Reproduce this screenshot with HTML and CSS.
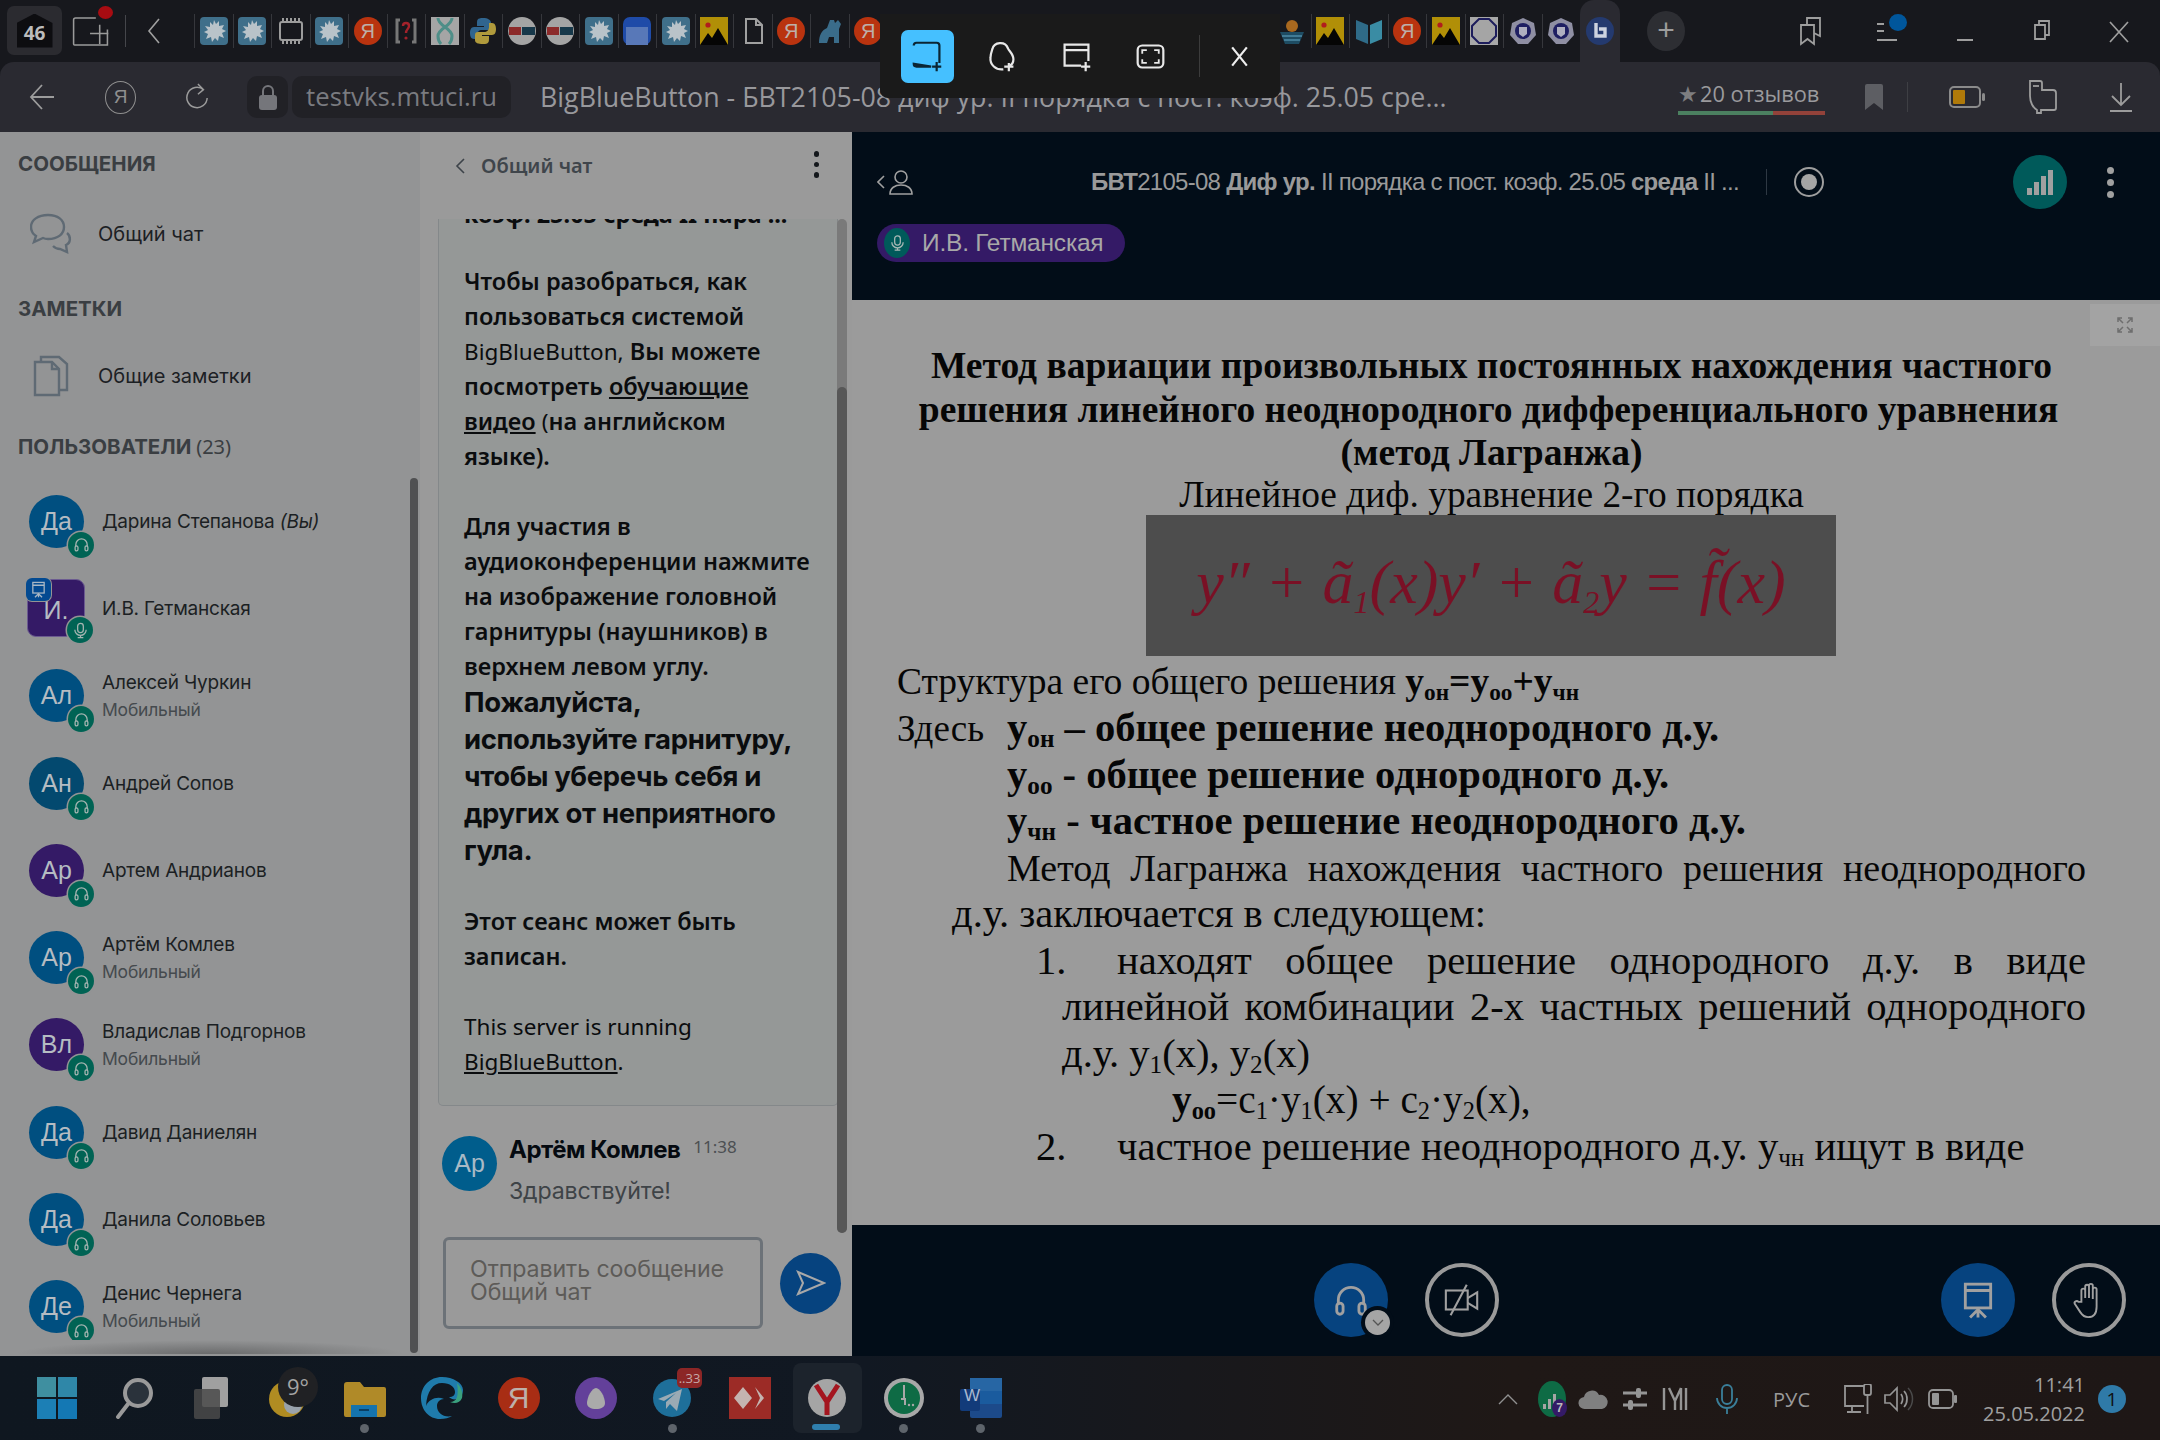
FILE: index.html
```html
<!DOCTYPE html>
<html lang="ru">
<head>
<meta charset="utf-8">
<title>BigBlueButton</title>
<link rel="stylesheet" href="styles.css">
</head>
<body>
<svg class="defs" width="0" height="0" aria-hidden="true">
  <defs>
    <symbol id="splat" viewBox="0 0 28 28"><rect width="28" height="28" rx="4" fill="#3f6f8a"/><path d="M14 3l2 4 3-3 0 5 5-1-2 4 4 2-4 2 2 5-5-2-1 5-3-3-3 4-1-5-5 2 2-5-4-2 4-2-3-4 5 1 0-5 3 3z" fill="#b9c3c9"/></symbol>
    <symbol id="chip" viewBox="0 0 28 28"><g fill="none" stroke="#9c9c9c" stroke-width="2"><rect x="3" y="5" width="22" height="18" rx="2"/><path d="M6 1v4M10 1v4M14 1v4M18 1v4M22 1v4M6 23v4M10 23v4M14 23v4M18 23v4M22 23v4"/></g></symbol>
    <symbol id="puzzle" viewBox="0 0 28 28"><path d="M8 3H5v22h3M20 3h3v22h-3" fill="none" stroke="#777" stroke-width="3"/><path d="M11 9c0-4 6-4 6 0 0 3-3 3-3 7" fill="none" stroke="#a3222b" stroke-width="2.4"/><circle cx="14" cy="21" r="1.6" fill="#a3222b"/></symbol>
    <symbol id="dna" viewBox="0 0 28 28"><rect width="28" height="28" fill="#a5a5a5"/><path d="M7 1c0 8 14 10 14 18 0 3-1 6-3 8M21 1c0 8-14 10-14 18 0 3 1 6 3 8" fill="none" stroke="#4e8e88" stroke-width="3"/></symbol>
    <symbol id="python" viewBox="0 0 28 28"><path d="M14 1c-6 0-6 2-6 6v2h7v1H5c-3 0-4 3-4 6s1 6 4 6h3v-4c0-3 2-5 5-5h6c2 0 3-1 3-3V6c0-3-3-5-8-5z" fill="#30658f"/><path d="M14 27c6 0 6-2 6-6v-2h-7v-1h10c3 0 4-3 4-6s-1-6-4-6h-3v4c0 3-2 5-5 5H9c-2 0-3 1-3 3v5c0 3 3 4 8 4z" fill="#b09a3c"/></symbol>
    <symbol id="mtu" viewBox="0 0 28 28"><circle cx="14" cy="14" r="14" fill="#a4a4a4"/><rect x="1" y="10" width="12" height="8" fill="#8c2a2a"/><rect x="14" y="10" width="13" height="8" fill="#17384a"/></symbol>
    <symbol id="bluepage" viewBox="0 0 28 28"><rect width="28" height="28" rx="7" fill="#1f4ba8"/><path d="M3 10h22v18H3z" fill="#5878b8"/></symbol>
    <symbol id="pic" viewBox="0 0 28 28"><rect width="28" height="28" fill="#b18f07"/><path d="M0 28l8-12 4 5 6-10 10 17z" fill="#050505"/><circle cx="8" cy="8" r="2.6" fill="#b11d1d"/></symbol>
    <symbol id="filei" viewBox="0 0 28 28"><path d="M7 2h10l6 6v18H7z M17 2v6h6" fill="none" stroke="#a0a0a0" stroke-width="2"/></symbol>
    <symbol id="frog" viewBox="0 0 28 28"><path d="M3 26c0-8 3-13 8-15l3-8h4l1 3 3-3 3 4-2 5v14h-5v-6h-5l-2 6z" fill="#3a6c8a"/></symbol>
    <symbol id="sunrise" viewBox="0 0 28 28"><circle cx="14" cy="9" r="6" fill="#a8681f"/><path d="M2 15h24L21 27H7z" fill="#1e4c63"/><path d="M4 19h20M6 23h16" stroke="#4e8ba8" stroke-width="1.4"/></symbol>
    <symbol id="book" viewBox="0 0 28 28"><path d="M1 3l12 5v19L1 22z" fill="#2f6b88"/><path d="M27 3L15 8v19l12-5z" fill="#3a8ca4"/></symbol>
    <symbol id="octa" viewBox="0 0 28 28"><rect width="28" height="28" fill="#a8a8a8"/><path d="M9 2h10l7 7v10l-7 7H9l-7-7V9z" fill="#a5a5a5" stroke="#1d1d5c" stroke-width="2"/></symbol>
    <symbol id="crest" viewBox="0 0 28 28"><path d="M14 1l11 5 2 12-8 9H9l-8-9 2-12z" fill="#8f8fa3"/><circle cx="14" cy="14" r="8" fill="#1f1f62"/><path d="M10 10h8v7l-4 3-4-3z" fill="#b0b0c0"/></symbol>
    <symbol id="bbb" viewBox="0 0 28 28"><circle cx="14" cy="14" r="14" fill="#243a6f"/><path d="M10 6v13h9v-7h-6" fill="none" stroke="#cdd3e0" stroke-width="3.4"/></symbol>
    <symbol id="chatbub" viewBox="0 0 42 42"><g fill="none" stroke="#5f6a74" stroke-width="2.4"><path d="M18 2C8 2 1 7 1 14c0 4 2 7 5 9l-2 6 9-4c2 1 3 1 5 1 10 0 16-5 16-12S28 2 18 2z"/><path d="M37 20c4 3 4 10-1 12l1 7-7-3c-3 0-5-1-7-3"/></g></symbol>
    <symbol id="notes" viewBox="0 0 36 42"><g fill="none" stroke="#5f6a74" stroke-width="2.4"><path d="M8 6V2h18l8 7v26h-7"/><path d="M2 7h17l7 7v26H2z"/><path d="M19 7v7h7"/></g></symbol>
    <symbol id="hp" viewBox="0 0 24 24"><g fill="none" stroke="currentColor" stroke-width="1.8"><path d="M4 15v-3a8 8 0 0 1 16 0v3"/><rect x="3" y="14" width="4" height="7" rx="2"/><rect x="17" y="14" width="4" height="7" rx="2"/></g></symbol>
    <symbol id="mic" viewBox="0 0 24 24"><g fill="none" stroke="currentColor" stroke-width="1.8"><rect x="8" y="2" width="8" height="13" rx="4"/><path d="M4 11a8 8 0 0 0 16 0M12 19v3M8 22h8"/></g></symbol>
    <symbol id="pres" viewBox="0 0 24 24"><g fill="none" stroke="currentColor" stroke-width="1.8"><rect x="4" y="2" width="16" height="15"/><path d="M4 6h16M12 17v6M12 18l-5 5M12 18l5 5"/></g></symbol>
    <symbol id="camoff" viewBox="0 0 40 40"><g fill="none" stroke="currentColor" stroke-width="2.2"><rect x="3" y="10" width="23" height="20"/><path d="M26 18l10-6v17l-10-6M25 4L8 36"/></g></symbol>
    <symbol id="hand" viewBox="0 0 40 40"><path d="M12 22V10a2 2 0 0 1 4 0v8-12a2 2 0 0 1 4 0v12V5a2 2 0 0 1 4 0v14-10a2 2 0 0 1 4 0v18c0 7-3 11-9 11-4 0-6-2-8-5l-6-9c-1-2 2-4 4-2z" fill="none" stroke="currentColor" stroke-width="2"/></symbol>
    <symbol id="snipadd" viewBox="0 0 36 36"><g fill="none" stroke="currentColor" stroke-width="2.4"><path d="M3 6a3 3 0 0 1 3-3h22a3 3 0 0 1 3 3v19M22 29H6a3 3 0 0 1-3-3z"/><path d="M28 24v10M23 29h10"/></g></symbol>
  </defs>
</svg>

<div class="app">
  <header class="tabstrip">
    <div class="home"><span>46</span></div>
    <div class="newtab">
      <svg class="ico-newtab" viewBox="0 0 38 30"><path d="M24 1H3a2 2 0 0 0-2 2v25a1 1 0 0 0 1 1h34V13M28 8v20M18 17h19" fill="none" stroke="#9a9a9a" stroke-width="1.6"/></svg>
      <i class="reddot"></i>
    </div>
    <i class="vsep"></i>
    <svg class="ico-back" viewBox="0 0 14 26"><path d="M12 1L2 13l10 12" fill="none" stroke="#a0a0a0" stroke-width="1.6"/></svg>
    <div class="tabs">
      <div class="tab"><svg class="fav"><use href="#splat"/></svg></div>
      <div class="tab"><svg class="fav"><use href="#splat"/></svg></div>
      <div class="tab"><svg class="fav"><use href="#chip"/></svg></div>
      <div class="tab"><svg class="fav"><use href="#splat"/></svg></div>
      <div class="tab"><span class="ya">Я</span></div>
      <div class="tab"><svg class="fav"><use href="#puzzle"/></svg></div>
      <div class="tab"><svg class="fav"><use href="#dna"/></svg></div>
      <div class="tab"><svg class="fav"><use href="#python"/></svg></div>
      <div class="tab"><svg class="fav"><use href="#mtu"/></svg></div>
      <div class="tab"><svg class="fav"><use href="#mtu"/></svg></div>
      <div class="tab"><svg class="fav"><use href="#splat"/></svg></div>
      <div class="tab"><svg class="fav"><use href="#bluepage"/></svg></div>
      <div class="tab"><svg class="fav"><use href="#splat"/></svg></div>
      <div class="tab"><svg class="fav"><use href="#pic"/></svg></div>
      <div class="tab"><svg class="fav"><use href="#filei"/></svg></div>
      <div class="tab"><span class="ya">Я</span></div>
      <div class="tab"><svg class="fav"><use href="#frog"/></svg></div>
      <div class="tab"><span class="ya">Я</span></div>
      <div class="tab"></div><div class="tab"></div><div class="tab"></div><div class="tab"></div><div class="tab"></div>
      <div class="tab"></div><div class="tab"></div><div class="tab"></div><div class="tab"></div><div class="tab"></div>
      <div class="tab"><svg class="fav"><use href="#sunrise"/></svg></div>
      <div class="tab"><svg class="fav"><use href="#pic"/></svg></div>
      <div class="tab"><svg class="fav"><use href="#book"/></svg></div>
      <div class="tab"><span class="ya">Я</span></div>
      <div class="tab"><svg class="fav"><use href="#pic"/></svg></div>
      <div class="tab"><svg class="fav"><use href="#octa"/></svg></div>
      <div class="tab"><svg class="fav"><use href="#crest"/></svg></div>
      <div class="tab"><svg class="fav"><use href="#crest"/></svg></div>
      <div class="tab tab-active"><svg class="fav"><use href="#bbb"/></svg></div>
    </div>
    <div class="plus">+</div>
    <div class="winctl">
      <svg class="wc" viewBox="0 0 24 30"><path d="M2 9h13v19l-6.500-5L2 28zM8 9V2h13v18l-6-3" fill="none" stroke="#9e9e9e" stroke-width="1.8"/></svg>
      <div class="menu-dot"><svg class="wc" viewBox="0 0 24 30"><path d="M1 8h7M1 15h7M1 24h20" stroke="#9e9e9e" stroke-width="2"/></svg><i></i></div>
      <svg class="wc" viewBox="0 0 24 30"><path d="M4 24h16" stroke="#9e9e9e" stroke-width="2"/></svg>
      <svg class="wc" viewBox="0 0 24 30"><path d="M5 9h10v14H5zM9 9V5h10v14h-4" fill="none" stroke="#9e9e9e" stroke-width="1.8"/></svg>
      <svg class="wc" viewBox="0 0 24 30"><path d="M3 6l18 20M21 6L3 26" stroke="#9e9e9e" stroke-width="1.7"/></svg>
    </div>
  </header>

  <nav class="toolbar">
    <svg class="tb-back" viewBox="0 0 26 28"><path d="M25 14H2M13 2L2 14l11 12" fill="none" stroke="#9c9c9c" stroke-width="1.8"/></svg>
    <div class="tb-ya">Я</div>
    <svg class="tb-reload" viewBox="0 0 26 30"><path d="M20 7A11 11 0 1 0 24 16M14 1l6 6-6 5" fill="none" stroke="#9c9c9c" stroke-width="1.6"/></svg>
    <div class="lockbox"><svg class="lock" viewBox="0 0 18 26"><path d="M4 11V7a5 5 0 0 1 10 0v4" fill="none" stroke="#75767b" stroke-width="2"/><rect x="0" y="11" width="18" height="15" rx="3" fill="#75767b"/></svg></div>
    <div class="urlbox">testvks.mtuci.ru</div>
    <div class="pagetitle">BigBlueButton - БВТ2105-08 диф ур. II порядка с пост. коэф. 25.05 сре...</div>
    <div class="reviews">
      <div class="rev-text"><span class="star">★</span>20 отзывов</div>
      <div class="rev-bar"><i class="g"></i><i class="r"></i></div>
    </div>
    <svg class="tb-mark" viewBox="0 0 18 26"><path d="M0 2a2 2 0 0 1 2-2h14a2 2 0 0 1 2 2v24l-9-7-9 7z" fill="#5d5e63"/></svg>
    <i class="tb-sep"></i>
    <svg class="tb-bat" viewBox="0 0 36 24"><rect x="1" y="2" width="30" height="20" rx="4" fill="none" stroke="#8b8b8b" stroke-width="2"/><rect x="4" y="5" width="12" height="14" rx="1" fill="#b07a0a"/><rect x="33" y="8" width="3" height="8" rx="1.500" fill="#8b8b8b"/></svg>
    <svg class="tb-ext" viewBox="0 0 32 34"><path d="M3 1h10a2 2 0 0 1 2 2v7h11a3 3 0 0 1 3 3v15a2 2 0 0 1-2 2H14v3h-4v-3c-4-2-7-8-7-14z" fill="none" stroke="#9c9c9c" stroke-width="1.8"/><path d="M6 6h6" stroke="#9c9c9c" stroke-width="1.800"/></svg>
    <svg class="tb-dl" viewBox="0 0 24 30"><path d="M12 1v22M3 14l9 9 9-9M1 29h22" fill="none" stroke="#9c9c9c" stroke-width="1.8"/></svg>
  </nav>

  <main class="main">
    <aside class="sidebar">
      <h2 class="side-head">СООБЩЕНИЯ</h2>
      <div class="side-item side-item-chat"><svg class="side-ico"><use href="#chatbub"/></svg><span>Общий чат</span></div>
      <h2 class="side-head side-head-notes">ЗАМЕТКИ</h2>
      <div class="side-item side-item-notes"><svg class="side-ico"><use href="#notes"/></svg><span>Общие заметки</span></div>
      <h2 class="side-head side-head-users">ПОЛЬЗОВАТЕЛИ <small>(23)</small></h2>
      <ul class="users">
        <li class="user"><div class="av av-blue">Да<span class="st"><svg><use href="#hp"/></svg></span></div><div class="uname">Дарина Степанова <em>(Вы)</em></div></li>
        <li class="user"><div class="av av-purple av-square">И.<span class="st"><svg><use href="#mic"/></svg></span><span class="st-pres"><svg><use href="#pres"/></svg></span></div><div class="uname">И.В. Гетманская</div></li>
        <li class="user"><div class="av av-blue">Ал<span class="st"><svg><use href="#hp"/></svg></span></div><div class="uname">Алексей Чуркин<small>Мобильный</small></div></li>
        <li class="user"><div class="av av-blue2">Ан<span class="st"><svg><use href="#hp"/></svg></span></div><div class="uname">Андрей Сопов</div></li>
        <li class="user"><div class="av av-purple">Ар<span class="st"><svg><use href="#hp"/></svg></span></div><div class="uname">Артем Андрианов</div></li>
        <li class="user"><div class="av av-blue">Ар<span class="st"><svg><use href="#hp"/></svg></span></div><div class="uname">Артём Комлев<small>Мобильный</small></div></li>
        <li class="user"><div class="av av-purple">Вл<span class="st"><svg><use href="#hp"/></svg></span></div><div class="uname">Владислав Подгорнов<small>Мобильный</small></div></li>
        <li class="user"><div class="av av-blue">Да<span class="st"><svg><use href="#hp"/></svg></span></div><div class="uname">Давид Даниелян</div></li>
        <li class="user"><div class="av av-blue">Да<span class="st"><svg><use href="#hp"/></svg></span></div><div class="uname">Данила Соловьев</div></li>
        <li class="user"><div class="av av-blue">Де<span class="st"><svg><use href="#hp"/></svg></span></div><div class="uname">Денис Чернега<small>Мобильный</small></div></li>
      </ul>
      <i class="side-shadow"></i>
      <i class="side-scroll"></i>
    </aside>

    <section class="chat">
      <div class="chat-head">
        <svg class="chat-back" viewBox="0 0 10 16"><path d="M9 1L2 8l7 7" fill="none" stroke="#3d4349" stroke-width="1.6"/></svg>
        <span class="chat-title">Общий чат</span>
        <span class="kebab kebab-dark"><i></i><i></i><i></i></span>
      </div>
      <div class="chat-scroll">
        <div class="welcome">
          <p class="clipline">коэф. 25.05 среда II пара ...</p>
          <p>Чтобы разобраться, как<br>пользоваться системой<br><span class="lat">BigBlueButton,</span> Вы можете<br>посмотреть <u>обучающие</u><br><u>видео</u> <span class="lat">(</span>на английском<br>языке).</p>
          <p>Для участия в<br>аудиоконференции нажмите<br>на изображение головной<br>гарнитуры (наушников) в<br>верхнем левом углу.</p>
          <p class="strong">Пожалуйста,<br>используйте гарнитуру,<br>чтобы уберечь себя и<br>других от неприятного<br>гула.</p>
          <p>Этот сеанс может быть<br>записан.</p>
          <p class="lat-p">This server is running<br><u>BigBlueButton</u>.</p>
        </div>
        <i class="chat-track"></i>
        <i class="chat-thumb"></i>
      </div>
      <div class="msg">
        <div class="msg-av">Ар</div>
        <div class="msg-body">
          <div class="msg-top"><b>Артём Комлев</b><time>11:38</time></div>
          <div class="msg-text">Здравствуйте!</div>
        </div>
      </div>
      <div class="composer">
        <div class="input">Отправить сообщение<br>Общий чат</div>
        <div class="send"><svg viewBox="0 0 30 26"><path d="M2 2l26 11L2 24l5-11z" fill="none" stroke="#a8a8a8" stroke-width="2"/></svg></div>
      </div>
    </section>

    <section class="pres">
      <div class="pres-top">
        <div class="pres-row">
          <svg class="usertoggle" viewBox="0 0 38 26"><path d="M7 7L1 13l6 6" fill="none" stroke="#a0a0a0" stroke-width="1.600"/><circle cx="24" cy="8" r="6" fill="none" stroke="#a0a0a0" stroke-width="1.600"/><path d="M13 25c0-6 5-9 11-9s11 3 11 9z" fill="none" stroke="#a0a0a0" stroke-width="1.600"/></svg>
          <div class="meeting"><b>БВТ</b>2105-08 <b>Диф ур.</b> II <span>порядка с пост. коэф.</span> 25.05 <b>среда</b> II ...</div>
          <i class="rec-sep"></i>
          <div class="rec"><i></i></div>
          <div class="signal"><i class="b1"></i><i class="b2"></i><i class="b3"></i><i class="b4"></i></div>
          <span class="kebab"><i></i><i></i><i></i></span>
        </div>
        <div class="talker"><span class="talker-mic"><svg><use href="#mic"/></svg></span>И.В. Гетманская</div>
      </div>
      <div class="slide">
        <div class="expand"><svg viewBox="0 0 20 20"><path d="M7 3H3v4M3 3l5 5M13 3h4v4M17 3l-5 5M7 17H3v-4M3 17l5-5M13 17h4v-4M17 17l-5-5" fill="none" stroke="#6e6e6e" stroke-width="1.500"/></svg></div>
        <div class="t-head">Метод вариации произвольных постоянных нахождения частного</div>
        <div class="t-head t-head-2">решения линейного неоднородного дифференциального уравнения</div>
        <div class="t-head">(метод Лагранжа)</div>
        <div class="t-sub">Линейное диф. уравнение 2-го порядка</div>
        <div class="formula">y″ + ã<sub>1</sub>(x)y′ + ã<sub>2</sub>y = f̃(x)</div>
        <div class="ln ln-s">Структура его общего решения <b>у<sub>он</sub>=у<sub>оо</sub>+у<sub>чн</sub></b></div>
        <div class="ln"><span class="zd">Здесь</span><b>у<sub>он</sub> – общее решение неоднородного д.у.</b></div>
        <div class="ln ind"><b>у<sub>оо</sub> - общее решение однородного д.у.</b></div>
        <div class="ln ind"><b>у<sub>чн</sub> - частное решение неоднородного д.у.</b></div>
        <div class="ln ind just meth">Метод Лагранжа нахождения частного решения неоднородного</div>
        <div class="ln ind2">д.у. заключается в следующем:</div>
        <div class="ln num"><span class="n">1.</span><span class="nt just-in">находят общее решение однородного д.у. в виде</span></div>
        <div class="ln ind3 just">линейной комбинации 2-х частных решений однородного</div>
        <div class="ln ind3">д.у. у<sub>1</sub>(x), у<sub>2</sub>(x)</div>
        <div class="ln ind4"><b>у<sub>оо</sub></b>=c<sub>1</sub>·у<sub>1</sub>(x) + c<sub>2</sub>·у<sub>2</sub>(x),</div>
        <div class="ln num"><span class="n">2.</span><span class="nt">частное решение неоднородного д.у. у<sub>чн</sub> ищут в виде</span></div>
      </div>
      <div class="pres-bottom">
        <div class="pb-left">
          <div class="rbtn rbtn-blue"><svg><use href="#hp"/></svg><span class="rbtn-caret"><svg viewBox="0 0 12 8"><path d="M1 1l5 5 5-5" fill="none" stroke="#555" stroke-width="1.300"/></svg></span></div>
          <div class="rbtn rbtn-ring"><svg><use href="#camoff"/></svg></div>
        </div>
        <div class="pb-right">
          <div class="rbtn rbtn-blue"><svg><use href="#pres"/></svg></div>
          <div class="rbtn rbtn-ring"><svg><use href="#hand"/></svg></div>
        </div>
      </div>
    </section>
  </main>

  <footer class="taskbar">
    <div class="tb-apps">
      <div class="app-i"><svg viewBox="0 0 42 42"><rect x="1" y="0" width="19" height="20" fill="#3f8fa0"/><rect x="22" y="0" width="19" height="20" fill="#2f87a8"/><rect x="1" y="22" width="19" height="20" fill="#1c7fb5"/><rect x="22" y="22" width="19" height="20" fill="#1478b4"/></svg></div>
      <div class="app-i"><svg viewBox="0 0 42 42"><circle cx="25" cy="16" r="13" fill="#2a323b" stroke="#9a9a9a" stroke-width="4"/><path d="M15 27L5 40" stroke="#9a9a9a" stroke-width="4" stroke-linecap="round"/></svg></div>
      <div class="app-i"><svg viewBox="0 0 42 42"><rect x="12" y="0" width="26" height="30" rx="2" fill="#a0a0a0"/><rect x="4" y="12" width="26" height="30" rx="2" fill="#4a4a4a" opacity=".85"/></svg></div>
      <div class="app-i app-weather"><svg viewBox="0 0 42 42"><circle cx="20" cy="22" r="18" fill="#b08c22"/><circle cx="26" cy="28" r="9" fill="#99a2ab"/><rect x="24" y="14" width="4" height="10" fill="#a32a30"/></svg><span class="wtemp">9°</span></div>
      <div class="app-i has-dot"><svg viewBox="0 0 42 42"><path d="M0 8a3 3 0 0 1 3-3h13l4 5h20a2 2 0 0 1 2 2v26a2 2 0 0 1-2 2H2a2 2 0 0 1-2-2z" fill="#b08a28"/><path d="M7 28h26v12H7z" fill="#1573ad"/><path d="M15 33h10" stroke="#0a3f64" stroke-width="2"/></svg></div>
      <div class="app-i"><svg viewBox="0 0 42 42"><path d="M21 0C9 0 0 9 0 21c0 12 8 21 19 21 5 0 9-1 12-3-8 2-15-3-15-10 0-4 3-7 7-7-7-3-15 0-18 7C6 14 12 6 21 6c8 0 13 4 13 9 0 3-2 5-6 5 3 3 7 3 10 1 3-2 4-5 4-8C42 6 32 0 21 0z" fill="#1f7bab"/><path d="M36 6c5 5 6 11 5 15-2 5-7 6-12 4 7 0 9-6 7-19z" fill="#3aa07e"/></svg></div>
      <div class="app-i"><span class="ya ya-big">Я</span></div>
      <div class="app-i"><svg viewBox="0 0 42 42"><circle cx="21" cy="21" r="21" fill="#63409a"/><path d="M21 11c4 0 9 9 9 15 0 4-4 6-9 6s-9-2-9-6c0-6 5-15 9-15z" fill="#aaa"/></svg></div>
      <div class="app-i has-dot app-tg"><svg viewBox="0 0 42 42"><circle cx="20" cy="21" r="19" fill="#1e6f9a"/><path d="M6 22l24-10-5 22-7-7-4 5 0-7 10-9-12 8z" fill="#9aaab4"/></svg><span class="tg-badge">..33</span></div>
      <div class="app-i"><svg viewBox="0 0 42 42"><rect width="42" height="42" fill="#9c2b26"/><path d="M14 10l-9 11 9 11 9-11zM26 10l9 11-9 11 5-11z" fill="#c4b4b0"/></svg></div>
      <div class="app-i app-active has-bar"><svg viewBox="0 0 42 42"><circle cx="21" cy="21" r="19" fill="#a5a5a5"/><path d="M10 8l11 17 11-17M21 24v14" fill="none" stroke="#a4151f" stroke-width="5"/></svg></div>
      <div class="app-i has-dot"><svg viewBox="0 0 42 42"><circle cx="21" cy="21" r="20" fill="#a8a8a8"/><circle cx="21" cy="21" r="16" fill="#0e6b45"/><path d="M21 8v14M18 22h4v6" stroke="#a8a8a8" stroke-width="2" fill="none"/><circle cx="26" cy="28" r="1.200" fill="#a8a8a8"/><circle cx="30" cy="28" r="1.200" fill="#a8a8a8"/></svg></div>
      <div class="app-i has-dot app-word"><svg viewBox="0 0 42 42"><rect x="10" y="1" width="32" height="40" rx="2" fill="#1c4a8a"/><rect x="10" y="1" width="32" height="13" fill="#2766a4"/><rect x="10" y="14" width="32" height="13" fill="#1a5b9e"/><rect x="0" y="12" width="20" height="22" rx="2" fill="#123b7a"/></svg><span class="w-letter">W</span></div>
    </div>
    <div class="tray">
      <svg class="tr tr-caret" viewBox="0 0 20 12"><path d="M1 11l9-9 9 9" fill="none" stroke="#909090" stroke-width="1.400"/></svg>
      <div class="tr-net"><i class="n1"></i><i class="n2"></i><i class="n3"></i><b>7</b></div>
      <svg class="tr tr-cloud" viewBox="0 0 30 24"><path d="M7 22a6 6 0 0 1-1-12 8 8 0 0 1 15-2 7 7 0 0 1 3 14z" fill="#808080"/></svg>
      <svg class="tr tr-slide" viewBox="0 0 26 24"><path d="M1 6h24M1 18h24" stroke="#959595" stroke-width="3"/><rect x="14" y="1" width="5" height="10" rx="2" fill="#959595"/><rect x="6" y="13" width="5" height="10" rx="2" fill="#959595"/></svg>
      <svg class="tr tr-m" viewBox="0 0 26 24"><path d="M2 1v22M7 1l6 13 6-13M13 14v9M24 1v22M19 1v22" fill="none" stroke="#959595" stroke-width="2.400"/></svg>
      <svg class="tr tr-mic" viewBox="0 0 22 30"><rect x="6" y="1" width="10" height="19" rx="5" fill="none" stroke="#3a7f9a" stroke-width="1.800"/><path d="M1 14a10 10 0 0 0 20 0M11 24v6" fill="none" stroke="#3a7f9a" stroke-width="1.800"/></svg>
      <span class="tr-lang">РУС</span>
      <svg class="tr tr-mon" viewBox="0 0 28 30"><path d="M20 2H1v20h19M8 22v5M3 28h14" fill="none" stroke="#959595" stroke-width="1.800"/><rect x="20" y="0" width="7" height="11" rx="2" fill="none" stroke="#959595" stroke-width="1.800"/><path d="M23.500 11v19" stroke="#959595" stroke-width="1.800"/></svg>
      <svg class="tr tr-spk" viewBox="0 0 30 26"><path d="M1 9h5l7-7v22l-7-7H1zM17 8c2 3 2 7 0 10M20 5c4 4 4 12 0 16" fill="none" stroke="#959595" stroke-width="1.700"/><path d="M24 2c6 6 6 16 0 22" fill="none" stroke="#4a4a4a" stroke-width="1.500"/></svg>
      <svg class="tr tr-bat" viewBox="0 0 30 20"><rect x="1" y="1" width="24" height="18" rx="4" fill="none" stroke="#959595" stroke-width="1.800"/><rect x="4" y="4" width="7" height="12" rx="1" fill="#959595"/><rect x="26" y="6" width="3" height="8" rx="1" fill="#959595"/></svg>
      <div class="clock"><span>11:41</span><span>25.05.2022</span></div>
      <div class="notif">1</div>
    </div>
  </footer>
</div>

<div class="snip">
  <div class="snip-btn snip-on"><svg><use href="#snipadd"/></svg></div>
  <div class="snip-btn"><svg viewBox="0 0 36 36"><path d="M8 10c2-8 14-9 17-1 1 3 6 6 6 12 0 4-2 6-4 7M20 32c-8 1-15-5-14-13 0-3 1-6 2-9" fill="none" stroke="#e8e8e8" stroke-width="2.400"/><path d="M26 25v9M21 29h10" stroke="#e8e8e8" stroke-width="2.400"/></svg></div>
  <div class="snip-btn"><svg viewBox="0 0 36 36"><path d="M5 5h26v6H5zM5 11v17h18M31 11v12M28 24v10M23 29h10" fill="none" stroke="#e8e8e8" stroke-width="2.400"/></svg></div>
  <div class="snip-btn"><svg viewBox="0 0 36 36"><rect x="4" y="6" width="28" height="24" rx="5" fill="none" stroke="#e8e8e8" stroke-width="2.400"/><path d="M9 15v-4h5M22 11h5v4M27 21v4h-5M14 25H9v-4" fill="none" stroke="#e8e8e8" stroke-width="2"/></svg></div>
  <i class="snip-sep"></i>
  <div class="snip-btn snip-last"><svg viewBox="0 0 36 36"><path d="M10 8l16 20M26 8L10 28" stroke="#eee" stroke-width="2.400"/></svg></div>
</div>
</body>
</html>
```
FILE: styles.css
```css
* { box-sizing: border-box; }
html, body { margin: 0; padding: 0; }
body { width: 2160px; height: 1440px; overflow: hidden; position: relative; background: #17181d; font-family: "Inter", "Liberation Sans", sans-serif; }
.defs { position: absolute; }
ul { list-style: none; margin: 0; padding: 0; }
p { margin: 0; }
i { display: block; font-style: normal; }
svg { display: block; }

.app { display: grid; grid-template-rows: 62px 70px 1224px 84px; width: 2160px; height: 1440px; }

/* tab strip */
.tabstrip { display: flex; align-items: center; background: #17181d; height: 62px; padding-left: 7px; position: relative; }
.home { width: 55px; height: 49px; margin-top: -1px; background: #2b2b30; border-radius: 7px; display: flex; align-items: center; justify-content: center; }
.home span { background: #0d0d10; color: #bcbcbc; font: 700 19px "Open Sans", sans-serif; padding: 4px 3px 0; clip-path: polygon(50% 0, 100% 28%, 100% 100%, 0 100%, 0 28%); width: 36px; height: 34px; text-align: center; line-height: 30px; }
.newtab { width: 38px; height: 29px; margin-left: 10px; position: relative; }
.ico-newtab { width: 38px; height: 29px; }
.reddot { position: absolute; left: 26px; top: -11px; width: 15px; height: 13px; border-radius: 50%; background: #a80c12; }
.vsep { width: 1px; height: 32px; background: #45464b; margin-left: 15px; }
.ico-back { width: 14px; height: 26px; margin-left: 21px; }
.tabs { display: flex; margin-left: 33px; height: 62px; align-items: center; }
.tab { width: 38.5px; height: 34px; border-left: 1px solid #36373c; display: flex; align-items: center; justify-content: center; position: relative; }
.tab-active { height: 62px; border-left: 0; width: 40px; background: #2a2a31; border-radius: 14px 14px 0 0; }
.fav { width: 28px; height: 28px; }
.ya { width: 28px; height: 28px; border-radius: 50%; background: #b9330f; color: #bdb0aa; font: 400 20px/28px "Liberation Sans", sans-serif; text-align: center; display: block; }
.plus { width: 38px; height: 40px; margin-left: 27px; border-radius: 50%; background: #2d2e33; color: #9d9d9d; font: 300 30px/38px "Liberation Sans", sans-serif; text-align: center; }
.winctl { display: flex; margin-left: auto; align-items: center; gap: 53px; padding-right: 29px; }
.wc { width: 24px; height: 30px; }
.menu-dot { position: relative; }
.menu-dot i { position: absolute; left: 13px; top: -2px; width: 18px; height: 17px; border-radius: 50%; background: #00569b; }

/* toolbar */
.toolbar { display: flex; align-items: center; background: #2a2a31; border-radius: 14px 14px 0 0; height: 70px; position: relative; padding-left: 29px; }
.tb-back { width: 26px; height: 28px; }
.tb-ya { width: 31px; height: 33px; margin-left: 50px; border-radius: 50%; border: 1.500px solid #8f8f8f; color: #8f8f8f; font: 400 19px/30px "Liberation Sans", sans-serif; text-align: center; }
.tb-reload { width: 24px; height: 30px; margin-left: 49px; }
.lockbox { width: 41px; height: 42px; margin-left: 38px; background: #212126; border-radius: 10px; display: flex; align-items: center; justify-content: center; }
.lock { width: 18px; height: 26px; }
.urlbox { width: 219px; height: 42px; margin-left: 4px; background: #212126; border-radius: 10px; color: #7a7b80; font: 400 25.700px/42px "Open Sans", sans-serif; text-align: center; white-space: nowrap; }
.pagetitle { width: 910px; margin-left: 29px; color: #98989c; font: 400 26.800px/42px "Open Sans", sans-serif; white-space: nowrap; overflow: hidden; }
.reviews { width: 147px; margin-left: 228px; }
.rev-text { color: #9a9a9d; font: 400 21.800px/28px "Open Sans", sans-serif; white-space: nowrap; }
.star { color: #7e7e80; font-size: 22px; margin-right: 2px; }
.rev-bar { display: flex; height: 4px; margin-top: 3px; }
.rev-bar .g { width: 95px; background: #4b8060; }
.rev-bar .r { flex: 1; background: #93423a; }
.tb-mark { width: 18px; height: 26px; margin-left: 40px; }
.tb-sep { width: 1px; height: 30px; background: #3e3f44; margin-left: 24px; }
.tb-bat { width: 36px; height: 24px; margin-left: 41px; }
.tb-ext { width: 32px; height: 34px; margin-left: 42px; }
.tb-dl { width: 24px; height: 30px; margin-left: 50px; }

/* main */
.main { display: flex; height: 1224px; overflow: hidden; }
.sidebar { width: 420px; background: #939495; position: relative; padding-top: 12px; overflow: hidden; flex: none; }
.side-head { margin: 0 0 0 18px; height: 40px; font: 700 20.500px/40px "Inter", "Liberation Sans", sans-serif; color: #3a3e42; white-space: nowrap; }
.side-head small { font: 400 20px "Noto Sans", sans-serif; }
.side-head-notes { margin-top: 25px; }
.side-head-users { margin-top: 21px; }
.side-item { display: flex; align-items: center; height: 60px; padding-left: 30px; font: 400 20px "Inter", "Liberation Sans", sans-serif; color: #1c2024; margin-top: 20px; }
.side-item-notes { margin-top: 17px; }
.side-ico { width: 42px; height: 42px; margin-right: 26px; }
.users { margin-top: 10.500px; }
.user { display: flex; align-items: center; height: 87.3px; padding-left: 29px; }
.av { width: 55px; height: 53px; border-radius: 50%; color: #b5bcc2; font: 400 25px/53px "Liberation Sans", sans-serif; text-align: center; position: relative; flex: none; }
.av-blue { background: #004f80; }
.av-blue2 { background: #03496f; }
.av-purple { background: #341a66; }
.av-square { border-radius: 9px; width: 58px; height: 58px; margin-left: -2px; margin-right: -1px; line-height: 60px; border: 1px solid #6b5a90; }
.st { position: absolute; left: 39px; top: 37px; width: 26px; height: 26px; border-radius: 50%; background: #006354; color: #a6b5b2; box-shadow: 0 0 0 1.500px #939495; display: flex; align-items: center; justify-content: center; }
.st svg { width: 17px; height: 17px; }
.st-pres { position: absolute; left: -2px; top: -2px; width: 25px; height: 23px; border-radius: 6px; background: #034a91; color: #a9b7c4; display: flex; align-items: center; justify-content: center; box-shadow: 0 0 0 1px #939495; }
.st-pres svg { width: 17px; height: 17px; }
.uname { margin-left: 18px; font: 400 19px/27px "Inter", "Liberation Sans", sans-serif; color: #1b1f23; letter-spacing: -.2px; }
.uname em { font-style: italic; }
.uname small { display: block; font-size: 17.500px; line-height: 27px; color: #454a4e; }
.side-shadow { position: absolute; left: 14px; bottom: 2px; width: 392px; height: 14px; background: radial-gradient(ellipse at 50% 100%, #6a6b6c 0, #939495 70%); }
.side-scroll { position: absolute; left: 410px; top: 346px; bottom: 3px; width: 8px; border-radius: 4px; background: #4f5052; }

/* chat */
.chat { width: 432px; background: #9a9a9a; flex: none; position: relative; }
.chat-head { height: 87px; display: flex; align-items: flex-start; padding: 20px 0 0 35px; }
.chat-back { width: 10px; height: 16px; margin: 6px 0 0 0; }
.chat-title { margin-left: 16px; font: 600 20px/27px "Noto Sans", sans-serif; color: #3f454b; }
.kebab { display: flex; flex-direction: column; gap: 5px; }
.kebab i { width: 7px; height: 7px; border-radius: 50%; background: #a0a0a0; }
.kebab-dark { margin-left: auto; margin-right: 33px; margin-top: -1px; }
.kebab-dark i { width: 5.500px; height: 5.500px; background: #14181c; }
.chat-scroll { height: 1014px; position: relative; overflow: hidden; }
.welcome { margin-left: 18px; width: 400px; height: 887px; background: #959897; border: 1px solid #84888a; border-top: 0; border-radius: 0 0 5px 5px; padding-left: 25px; font: 600 23.500px/35px "Noto Sans", sans-serif; letter-spacing: 0; color: #0a0c0e; }
.welcome p { margin-bottom: 35px; white-space: nowrap; }
.welcome .clipline { font-weight: 700; height: 3px; margin-bottom: 41.500px; transform: translateY(-22px); }
.lat { font-weight: 400; font-size: 22.500px; }
.welcome .strong { font: 700 27.500px/37px "Inter", "Noto Sans", sans-serif; margin-top: -35px; letter-spacing: -.35px; }
.lat-p { font-weight: 400; font-size: 22.500px; }
.chat-track { position: absolute; left: 417px; top: 0; width: 10px; height: 1014px; background: #7a7a7a; border-radius: 5px; }
.chat-thumb { position: absolute; left: 417px; top: 168px; width: 10px; height: 846px; background: #575757; border-radius: 5px; }
.msg { display: flex; position: absolute; top: 1004px; left: 22px; }
.msg-av { width: 55px; height: 55px; border-radius: 50%; background: #005d8c; color: #a8bac6; font: 400 25px/55px "Liberation Sans", sans-serif; text-align: center; }
.msg-body { margin-left: 12px; margin-top: -2px; }
.msg-top { display: flex; align-items: flex-start; }
.msg-top b { font: 700 24px/32px "Inter", "Noto Sans", sans-serif; color: #050a10; letter-spacing: -.5px; white-space: nowrap; }
.msg-top time { margin-left: 13px; font: 400 17px/26px "Noto Sans", sans-serif; color: #4c4f52; }
.msg-text { margin-top: 10px; font: 400 23.200px/30px "Inter", "Liberation Sans", sans-serif; color: #3e4347; letter-spacing: -.2px; }
.composer { position: absolute; top: 1105px; left: 23px; display: flex; align-items: center; }
.input { width: 320px; height: 92px; border: 3px solid #6c7278; border-radius: 6px; padding: 18px 0 0 24px; font: 400 23.200px/23px "Inter", "Liberation Sans", sans-serif; color: #5d5b58; letter-spacing: -.1px; }
.send { width: 61px; height: 61px; margin-left: 17px; border-radius: 50%; background: #06437f; display: flex; align-items: center; justify-content: center; }
.send svg { width: 30px; height: 26px; }

/* presentation */
.pres { width: 1308px; flex: none; display: flex; flex-direction: column; background: #020d18; }
.pres-top { height: 168px; padding: 23px 0 0 25px; }
.pres-row { display: flex; align-items: center; height: 54px; }
.usertoggle { width: 38px; height: 26px; }
.meeting { margin-left: 176px; width: 647px; color: #9a9a9a; font: 300 24px/34px "Liberation Sans", sans-serif; letter-spacing: -.72px; white-space: nowrap; }
.meeting b { font-weight: 700; }
.meeting span { font-weight: 400; }
.rec-sep { width: 1px; height: 26px; background: #2e3843; margin-left: 28px; }
.rec { width: 30px; height: 30px; margin-left: 27px; border-radius: 50%; border: 2px solid #9e9e9e; display: flex; align-items: center; justify-content: center; }
.rec i { width: 16px; height: 16px; border-radius: 50%; background: #a5a5a5; }
.signal { width: 54px; height: 54px; margin-left: 189px; border-radius: 50%; background: #005a5a; display: flex; align-items: flex-end; justify-content: center; gap: 2px; padding-bottom: 14px; }
.signal i { width: 5px; background: #a0a0a0; }
.b1 { height: 7px; } .b2 { height: 13px; } .b3 { height: 19px; } .b4 { height: 25px; }
.kebab:not(.kebab-dark) { margin-left: 40px; }
.talker { margin-top: 15px; width: 248px; height: 38px; background: #341a66; border-radius: 19px; display: flex; align-items: center; color: #a8a8a8; font: 400 24.500px/38px "Liberation Sans", sans-serif; letter-spacing: -.2px; padding-left: 7px; }
.talker-mic { width: 26px; height: 30px; border-radius: 50%; background: #005a5a; color: #a8b8b5; display: flex; align-items: center; justify-content: center; margin-right: 12px; }
.talker-mic svg { width: 17px; height: 20px; }

.slide { height: 925px; background: #9b9b9b; padding: 44px 74px 0 45px; color: #060606; font-family: "Liberation Serif", serif; position: relative; white-space: nowrap; }
.expand { position: absolute; right: 0; top: 4px; width: 70px; height: 42px; background: #a3a3a3; display: flex; align-items: center; justify-content: center; }
.expand svg { width: 20px; height: 20px; }
.t-head { font-weight: 700; font-size: 37.500px; line-height: 43.500px; text-align: center; height: 43.500px; }
.t-head-2 { padding-right: 6px; }
.t-sub { font-size: 37.400px; line-height: 40px; height: 40px; text-align: center; }
.formula { width: 690px; height: 141px; margin: 0 0 3px 249px; background: #4d4d4d; color: #7a1025; font: italic 400 62px/135px "Liberation Serif", serif; text-align: center; overflow: hidden; white-space: nowrap; }
.formula sub { font-size: 32px; vertical-align: -10px; line-height: 0; }
.ln { height: 46.500px; line-height: 46.500px; font-size: 40.600px; }
.ln-s { font-size: 37.500px; }
.ln sub { font-size: 62%; vertical-align: -6px; line-height: 0; }
.zd { display: inline-block; width: 110px; font-size: 37px; }
.ind { padding-left: 110px; }
.ind2 { padding-left: 55px; }
.ind3 { padding-left: 165px; }
.ind4 { padding-left: 275px; font-size: 39.300px; }
.just { text-align: justify; text-align-last: justify; white-space: normal; overflow: hidden; }
.meth { font-size: 38px; }
.num { padding-left: 139px; display: flex; }
.num .n { width: 81px; flex: none; }
.num .nt { flex: 1; }
.just-in { text-align: justify; text-align-last: justify; white-space: normal; }
.pres-bottom { flex: 1; display: flex; justify-content: space-between; align-items: center; padding: 0 34px 0 462px; }
.pb-left, .pb-right { display: flex; gap: 37px; margin-top: 19px; }
.rbtn { width: 74px; height: 74px; border-radius: 50%; display: flex; align-items: center; justify-content: center; position: relative; color: #a0a0a0; }
.rbtn-blue { background: #06437f; }
.rbtn-ring { border: 4px solid #9a9a9a; }
.rbtn > svg { width: 38px; height: 38px; }
.rbtn-caret { position: absolute; left: 51px; top: 47px; width: 25px; height: 25px; border-radius: 50%; background: #a5a5a5; box-shadow: 0 0 0 4px #020d18; display: flex; align-items: center; justify-content: center; }
.rbtn-caret svg { width: 12px; height: 8px; }

/* taskbar */
.taskbar { display: flex; justify-content: space-between; background: linear-gradient(90deg, #0f1720 0, #111822 40%, #1f1816 70%, #1e1716 100%); height: 84px; padding: 0 0 0 18px; }
.tb-apps { display: flex; align-items: flex-start; }
.app-i { width: 77px; height: 84px; position: relative; display: flex; justify-content: center; padding-top: 21px; }
.app-i svg { width: 42px; height: 42px; }
.app-i.has-dot::after { content: ""; position: absolute; left: 34px; top: 68px; width: 9px; height: 9px; border-radius: 50%; background: #5e646b; }
.app-i.has-bar::after { content: ""; position: absolute; left: 24px; top: 68px; width: 28px; height: 6px; border-radius: 3px; background: #2f7fae; }
.app-active::before { content: ""; position: absolute; left: 5px; top: 7px; width: 69px; height: 70px; border-radius: 8px; background: #1c232c; }
.app-active svg { position: relative; }
.ya-big { width: 42px; height: 42px; font-size: 30px; line-height: 42px; background: #a82d14; }
.wtemp { position: absolute; left: 29px; top: 11px; width: 40px; height: 40px; border-radius: 50%; background: #202124; color: #a5a5a5; font: 400 22px/38px "Open Sans", sans-serif; text-align: center; }
.tg-badge { position: absolute; left: 43px; top: 12px; width: 25px; height: 20px; border-radius: 5px; background: #8c2626; color: #c5a8a8; font: 400 13px/20px "Open Sans", sans-serif; text-align: center; }
.w-letter { position: absolute; left: 22px; top: 28px; color: #a8b8d0; font: 400 17px/24px "Liberation Sans", sans-serif; }
.tray { display: flex; align-items: center; color: #a0a0a0; padding-top: 2px; }
.tr { flex: none; }
.tr-caret { width: 20px; height: 12px; }
.tr-net { width: 28px; height: 36px; margin-left: 20px; border-radius: 50%; background: #0e6b45; position: relative; display: flex; align-items: flex-end; gap: 2px; padding: 0 0 8px 5px; }
.tr-net i { width: 3px; background: #a5a5a5; }
.n1 { height: 5px; } .n2 { height: 10px; } .n3 { height: 15px; }
.tr-net b { position: absolute; right: -1px; bottom: 0; width: 15px; height: 18px; border-radius: 50%; background: #341a66; color: #bbb; font: 700 12px/18px "Liberation Sans", sans-serif; text-align: center; }
.tr-cloud { width: 30px; height: 24px; margin-left: 12px; }
.tr-slide { width: 26px; height: 24px; margin-left: 14px; }
.tr-m { width: 26px; height: 24px; margin-left: 14px; }
.tr-mic { width: 22px; height: 34px; margin-left: 28px; }
.tr-lang { font: 400 20px "Open Sans", sans-serif; color: #9a9a9a; margin-left: 35px; }
.tr-mon { width: 28px; height: 30px; margin-left: 34px; }
.tr-spk { width: 30px; height: 26px; margin-left: 12px; }
.tr-bat { width: 30px; height: 20px; margin-left: 14px; }
.clock { display: flex; flex-direction: column; align-items: flex-end; margin-left: 25px; font: 400 20px/29px "Open Sans", sans-serif; color: #a0a0a0; }
.notif { width: 28px; height: 28px; margin: 0 34px 0 13px; border-radius: 50%; background: #2f7aa8; color: #0e1012; font: 400 19px/28px "Open Sans", sans-serif; text-align: center; }

/* snipping overlay */
.snip { position: absolute; left: 880px; top: 14px; width: 400px; height: 84px; background: #1a1a1a; border-radius: 0 0 8px 8px; display: flex; align-items: center; padding-left: 21px; }
.snip-btn { width: 53px; height: 53px; flex: none; border-radius: 7px; margin-right: 21.400px; display: flex; align-items: center; justify-content: center; color: #e8e8e8; }
.snip-last { margin-right: 0; }
.snip-btn svg { width: 33px; height: 33px; }
.snip-on { background: #45c0ff; color: #0b2533; }
.snip-sep { width: 1px; height: 42px; flex: none; background: #3c3c3c; margin-right: 13px; }
```
